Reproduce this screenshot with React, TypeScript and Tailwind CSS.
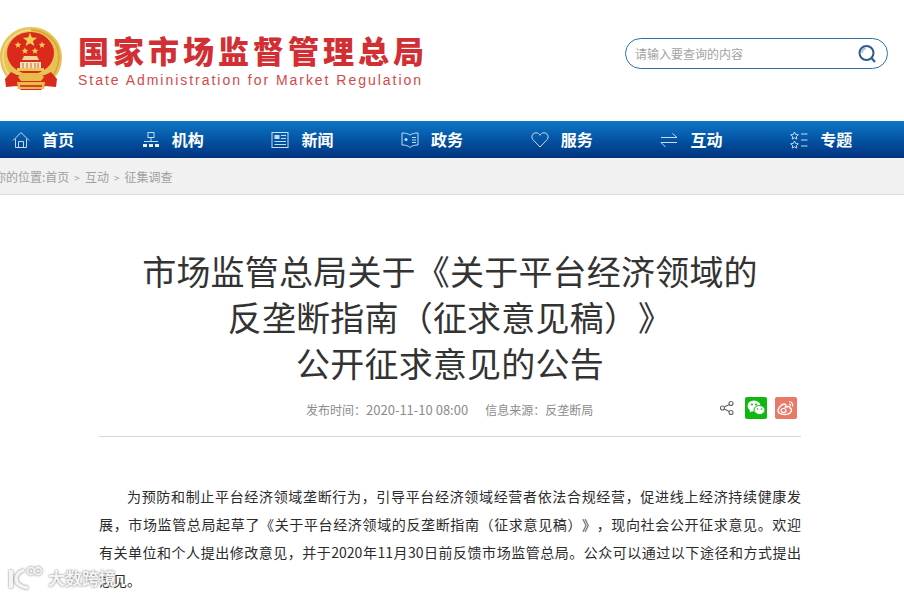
import React from "react";

const cjk = "font-['Noto_Sans_CJK_SC','Liberation_Sans',sans-serif]";

function Emblem() {
  const stars: [number, number, number][] = [[30, 14, 7.5], [18, 19, 3.5], [25, 25, 3.5], [35, 25, 3.5], [42, 19, 3.5]];
  return (
    <svg width="62" height="66" viewBox="0 0 62 66" className="shrink-0">
      <path d="M31 1C14 1 0 14 0 31c0 12 5 20 13 26l5-3h26l5 3c8-6 13-14 13-26C62 14 48 1 31 1Z" fill="#e8c255" />
      <path d="M31 4C16 4 3 16 3 31c0 10 4 17 10 23" fill="none" stroke="#f2dc8e" strokeWidth="1.500" />
      <path d="M31 4c15 0 28 12 28 27 0 10-4 17-10 23" fill="none" stroke="#d6a437" strokeWidth="1.500" />
      <ellipse cx="30.500" cy="27" rx="23.500" ry="21" fill="#d92a1c" />
      {stars.map(([x, y, r], i) => (
        <polygon
          key={i}
          fill="#f6cf55"
          points={Array.from({ length: 10 }, (_, k) => {
            const a = -Math.PI / 2 + (k * Math.PI) / 5;
            const q = k % 2 ? r * 0.42 : r;
            return `${x + q * Math.cos(a)},${y + q * Math.sin(a)}`;
          }).join(" ")}
        />
      ))}
      <path d="M24 30h13l2 4H22Z" fill="#f2d592" />
      <path d="M20 36h21v6H20Z" fill="#f7e6bd" />
      <path d="M23 37v5M27 37v5M31 37v5M35 37v5M38 37v5" stroke="#cf5a34" strokeWidth="1" />
      <rect x="17" y="42" width="27" height="3" fill="#edc65a" />
      <path d="M11 46 5 53l1 8 11-1 4 4h20l4-4 11 1 1-8-6-7-6 3H17Z" fill="#d92a1c" />
      <path d="M21 47h20l3 4-3 4H21l-3-4Z" fill="#e9bb4b" />
      <path d="M17 56h28l-1 7H18Z" fill="#e9bb4b" />
      <path d="M20 59h22v2H20Z" fill="#d8402b" />
    </svg>
  );
}

const ic = { fill: "none", stroke: "#c3dcf2", strokeWidth: 1 };

const NavIcons: Record<string, React.ReactNode> = {
  home: (
    <svg width="18" height="18" viewBox="0 0 18 18" {...ic}>
      <path d="M1 9.500 9 1.500l8 8M3.500 8V16.500h11V8M6.500 16.500V10.500h5v6" />
    </svg>
  ),
  org: (
    <svg width="18" height="18" viewBox="0 0 18 18" {...ic}>
      <rect x="6" y="1.500" width="6" height="5" />
      <path d="M9 6.500V10M2 10.500H16" />
      <rect x="1" y="13" width="4" height="3" fill="#e6f0fa" stroke="none" />
      <rect x="7" y="13" width="4" height="3" fill="#e6f0fa" stroke="none" />
      <rect x="13" y="13" width="4" height="3" fill="#e6f0fa" stroke="none" />
    </svg>
  ),
  news: (
    <svg width="18" height="18" viewBox="0 0 18 18" {...ic}>
      <rect x="1" y="1.500" width="16" height="15" />
      <rect x="3.500" y="4" width="5" height="4" fill="#c3dcf2" stroke="none" />
      <path d="M10 4.500h5M10 7.500h5M3.500 10.500h11.500M3.500 13.500h11.500" />
    </svg>
  ),
  gov: (
    <svg width="18" height="18" viewBox="0 0 18 18" {...ic}>
      <path d="M1 2c3 0 6 .5 8 2 2-1.500 5-2 8-2v12c-3 0-6 .5-8 2.500C7 14.500 4 14 1 14Z" />
      <path d="M11 6.500h4M11 9h4M11 11.500h4" />
      <circle cx="5" cy="8.500" r="1.500" fill="#c3dcf2" stroke="none" />
    </svg>
  ),
  service: (
    <svg width="18" height="18" viewBox="0 0 18 18" {...ic}>
      <path d="M9 16 1.800 8.500C-.5 5 2 1.800 5 1.800c2 0 3.200 1 4 2.500.8-1.500 2-2.500 4-2.500 3 0 5.500 3.200 3.200 6.700Z" />
    </svg>
  ),
  interact: (
    <svg width="18" height="18" viewBox="0 0 18 18" {...ic}>
      <path d="M1 6.500h16L12.500 2.500M17 11.500H1L5.500 16" />
    </svg>
  ),
  topic: (
    <svg width="18" height="18" viewBox="0 0 18 18" {...ic}>
      <path d="M4.500 1 5.700 3.500l2.600.3-2 1.800.5 2.500-2.300-1.300-2.300 1.300.5-2.500-2-1.800 2.600-.3Z" />
      <path d="M4.500 10l1.200 2.500 2.600.3-2 1.800.5 2.500-2.300-1.300-2.300 1.300.5-2.500-2-1.800 2.600-.3Z" />
      <path d="M11 3h6.500M11 9h6.500M11 15h6.500" />
    </svg>
  ),
};

const navItems = [
  ["home", "首页"],
  ["org", "机构"],
  ["news", "新闻"],
  ["gov", "政务"],
  ["service", "服务"],
  ["interact", "互动"],
  ["topic", "专题"],
];

const bodyLines = [
  "为预防和制止平台经济领域垄断行为，引导平台经济领域经营者依法合规经营，促进线上经济持续健康发",
  "展，市场监管总局起草了《关于平台经济领域的反垄断指南（征求意见稿）》，现向社会公开征求意见。欢迎",
  "有关单位和个人提出修改意见，并于2020年11月30日前反馈市场监管总局。公众可以通过以下途径和方式提出",
];

export default function App() {
  return (
    <div className={`relative h-[596px] w-[904px] overflow-hidden bg-white [text-spacing-trim:space-all] ${cjk}`}>
      <header className="flex h-[121px] items-start justify-between pr-[16px]">
        <div className="mt-[26px] flex">
          <Emblem />
          <div className="ml-[16px] pt-[6px]">
            <div className="text-[31px] leading-[36px] font-black tracking-[4px] whitespace-nowrap text-[#d12f33]">
              国家市场监督管理总局
            </div>
            <div className="mt-[3px] font-['Liberation_Sans',sans-serif] text-[14px] leading-[18px] tracking-[1.97px] whitespace-nowrap text-[#d2494c]">
              State Administration for Market Regulation
            </div>
          </div>
        </div>
        <div className="mt-[38px] flex h-[31px] w-[263px] items-center justify-between rounded-full border border-[#2e71ac] pr-[10px] pl-[9px]">
          <span className="text-[12px] text-[#a3a3a3]">请输入要查询的内容</span>
          <svg width="20" height="20" viewBox="0 0 20 20" fill="none">
            <circle cx="9.500" cy="9" r="7" stroke="#2f5a8e" strokeWidth="2" />
            <path d="M5 9a4.500 4.500 0 0 1 4-4.500" stroke="#a9c4df" strokeWidth="2" />
            <path d="m14.500 14 3.500 4" stroke="#2f5a8e" strokeWidth="2" />
          </svg>
        </div>
      </header>

      <nav className="flex h-[37px] items-center bg-gradient-to-b from-[#1077c8] to-[#01337f] pl-[12px]">
        {navItems.map(([key, label]) => (
          <div key={key} className="flex w-[129.700px] shrink-0 items-center gap-[12px]">
            {NavIcons[key]}
            <span className="text-[16px] leading-[37px] font-bold text-white">{label}</span>
          </div>
        ))}
      </nav>

      <div className="flex h-[37px] items-center border-b border-[#d8dde3] bg-[#f1f1f1] pt-[2px] text-[12px] whitespace-nowrap text-[#a0a0a0]">
        <span className="-ml-[6px]">你的位置:首页</span>
        <span className="mx-[5px] text-[10px]">&gt;</span>
        <span>互动</span>
        <span className="mx-[5px] text-[10px]">&gt;</span>
        <span>征集调查</span>
      </div>

      <main className="mx-[99px] w-[702px]">
        <h1 className="mt-[53px] text-center text-[34px] leading-[46px] font-normal tracking-[0.2px] text-[#333333]">
          <div>市场监管总局关于《关于平台经济领域的</div>
          <div>反垄断指南（征求意见稿）》</div>
          <div>公开征求意见的公告</div>
        </h1>

        <div className="flex h-[51px] items-start border-b border-[#d6d6d6] pt-[11px] text-[12px] leading-[26px] text-[#8c8c8c]">
          <div className="ml-[207px] flex gap-[17px]">
            <span>
              发布时间：<span className="text-[13px]">2020-11-10 08:00</span>
            </span>
            <span>信息来源：反垄断局</span>
          </div>
          <div className="mr-[4px] ml-auto flex h-[22px] items-center">
            <svg width="16" height="16" viewBox="0 0 16 16" fill="none" stroke="#666" strokeWidth="1.100">
              <circle cx="3.500" cy="8" r="2" />
              <circle cx="12" cy="3.500" r="2" />
              <circle cx="12" cy="12.500" r="2" />
              <path d="m5.300 7 5-2.600M5.300 9l5 2.600" />
            </svg>
            <div className="ml-[10px] flex h-[22px] w-[22px] items-center justify-center rounded-[2px] bg-[#0fb70f]">
              <svg width="18" height="16" viewBox="0 0 18 16">
                <ellipse cx="7" cy="6" rx="6.500" ry="5.500" fill="#fff" />
                <path d="m3.500 9.500-1 3 3-1.500Z" fill="#fff" />
                <ellipse cx="12.500" cy="10" rx="5.500" ry="4.500" stroke="#0fb70f" strokeWidth="1" fill="#fff" />
                <circle cx="5" cy="4.500" r="1" fill="#0fb70f" />
                <circle cx="9" cy="4.500" r="1" fill="#0fb70f" />
                <circle cx="10.500" cy="9" r=".8" fill="#0fb70f" />
                <circle cx="14.500" cy="9" r=".8" fill="#0fb70f" />
              </svg>
            </div>
            <div className="ml-[8px] flex h-[22px] w-[22px] items-center justify-center rounded-[2px] bg-[#ea7a68]">
              <svg width="18" height="16" viewBox="0 0 18 16" fill="none" stroke="#fff">
                <path d="M7.500 14.500c-3.500 0-6.500-1.500-6.500-4 0-2.800 4-6.500 6.500-6.500 1.500 0 1.500 1.500 1 3 2.500-1 4.500-.8 4.500 1 3 .8 1.500 6.500-5.500 6.500Z" strokeWidth="1.500" />
                <ellipse cx="6.500" cy="10.500" rx="2.500" ry="2" strokeWidth="1.200" />
                <path d="M12 1.500c2.500 0 4.500 2.500 3.500 5M12 4c1 0 2 1 1.500 2" strokeWidth="1.200" />
              </svg>
            </div>
          </div>
        </div>

        <div className="mt-[45px] text-[14px] leading-[28px] text-[#2b2b2b]">
          {bodyLines.map((line, i) => (
            <div key={i} className={`[text-align-last:justify] ${i === 0 ? "pl-[28px]" : ""}`}>
              {line}
            </div>
          ))}
          <div>意见。</div>
        </div>
      </main>

      <div className="absolute top-[564px] left-[8px] flex items-end drop-shadow-[0_0_1px_#777]">
        <svg width="36" height="26" viewBox="0 0 36 26" fill="none" stroke="#f4f4f4">
          <path d="M3 6v18" strokeWidth="4" />
          <path d="M16 6c-5 2-8 5-8 9s4 8 12 9" strokeWidth="3.500" />
          <circle cx="23" cy="7" r="3.500" strokeWidth="1.800" />
          <circle cx="30" cy="7" r="3.500" strokeWidth="1.800" />
        </svg>
        <span className="ml-[4px] text-[17px] leading-[24px] font-bold text-[#f4f4f4]">大数跨境</span>
      </div>
    </div>
  );
}
